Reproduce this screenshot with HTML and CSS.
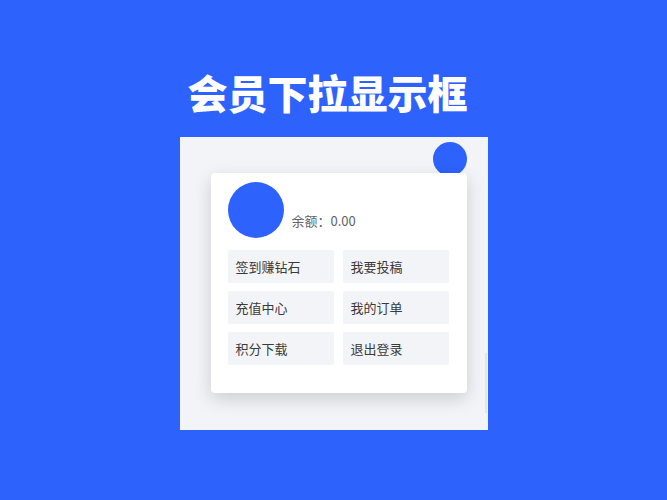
FILE: index.html
```html
<!DOCTYPE html>
<html lang="zh">
<head>
<meta charset="utf-8">
<link rel="stylesheet" href="styles.css">
</head>
<body>
<h1 class="title">会员下拉显示框</h1>
<div class="panel">
  <div class="topbar"><span class="trigger"></span></div>
  <div class="dropdown">
    <div class="profile">
      <span class="avatar"></span>
      <span class="balance">余额：0.00</span>
    </div>
    <div class="menu">
      <a class="item">签到赚钻石</a>
      <a class="item">我要投稿</a>
      <a class="item">充值中心</a>
      <a class="item">我的订单</a>
      <a class="item">积分下载</a>
      <a class="item">退出登录</a>
    </div>
  </div>
  <span class="scroll"></span>
</div>
</body>
</html>
```
FILE: styles.css
```css
html, body {
  margin: 0;
  padding: 0;
}
body {
  width: 667px;
  height: 500px;
  background: #2d62fc;
  font-family: "Noto Sans CJK SC", "Noto Sans", sans-serif;
  display: flex;
  flex-direction: column;
  align-items: center;
  padding-top: 68px;
  box-sizing: border-box;
  overflow: hidden;
}
.title {
  margin: 0 0 21px;
  padding-right: 12px;
  font-size: 40px;
  line-height: 48px;
  font-weight: 900;
  color: #ffffff;
  letter-spacing: 0;
}
.panel {
  position: relative;
  width: 308px;
  height: 293px;
  background: #f3f4f8;
}
.topbar {
  display: flex;
  justify-content: flex-end;
  padding: 5px 21px 0 0;
}
.trigger {
  width: 34px;
  height: 34px;
  border-radius: 50%;
  background: #2d62fc;
}
.dropdown {
  position: absolute;
  left: 31px;
  top: 36px;
  width: 256px;
  height: 220px;
  box-sizing: border-box;
  padding: 9px 18px 0 17px;
  background: #ffffff;
  border-radius: 4px;
  box-shadow: 0 6px 18px rgba(0, 0, 0, 0.16);
}
.profile {
  display: flex;
  align-items: flex-end;
  gap: 8px;
  height: 56px;
}
.avatar {
  width: 56px;
  height: 56px;
  border-radius: 50%;
  background: #2d62fc;
  flex: none;
}
.balance {
  font-size: 13px;
  line-height: 18px;
  color: #606266;
  margin-bottom: 8px;
}
.menu {
  margin-top: 12px;
  display: grid;
  grid-template-columns: 106px 106px;
  column-gap: 9px;
  row-gap: 8px;
}
.item {
  height: 33px;
  line-height: 33px;
  padding-left: 8px;
  background: #f3f4f8;
  border-radius: 2px;
  font-size: 13px;
  color: #3a3a3a;
}
.scroll {
  position: absolute;
  right: 1px;
  top: 216px;
  width: 2px;
  height: 60px;
  background: #e2e4ea;
}
```
